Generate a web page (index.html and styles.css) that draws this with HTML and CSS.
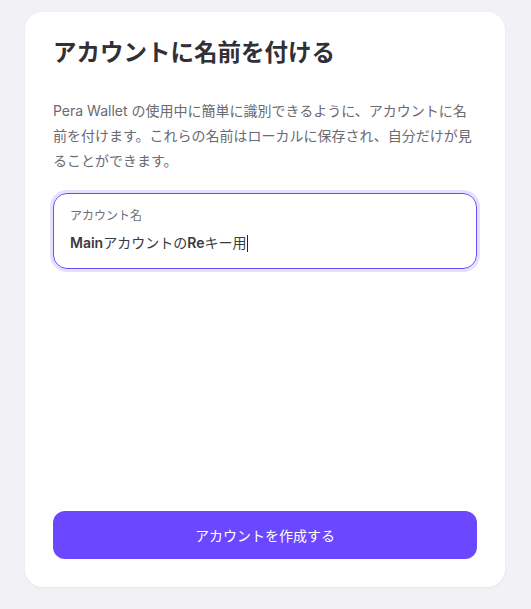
FILE: index.html
```html
<!DOCTYPE html>
<html lang="ja">
<head>
<meta charset="utf-8">
<link rel="stylesheet" href="styles.css">
</head>
<body>
<div class="card">
  <h1 class="title">アカウントに名前を付ける</h1>
  <p class="desc">Pera Wallet の使用中に簡単に識別できるように、アカウントに名前を付けます。これらの名前はローカルに保存され、自分だけが見ることができます。</p>
  <div class="field">
    <div class="field-label">アカウント名</div>
    <div class="field-value"><span class="lat">Main</span>アカウントの<span class="lat">Re</span>キー用<span class="caret"></span></div>
  </div>
  <button class="btn">アカウントを作成する</button>
</div>
</body>
</html>
```

FILE: styles.css
```css
html, body {
  margin: 0;
  padding: 0;
}
body {
  background: #f2f1f6;
  font-family: Inter, "Noto Sans CJK JP", sans-serif;
  width: 531px;
  height: 609px;
}
.card {
  box-sizing: border-box;
  margin: 12px 0 0 25px;
  width: 480px;
  height: 575px;
  background: #ffffff;
  border-radius: 18px;
  box-shadow: 0 1px 3px rgba(0,0,0,0.05);
  padding: 25px 28px 28px;
  display: flex;
  flex-direction: column;
}
.title {
  margin: 0;
  font-size: 23.5px;
  line-height: 32px;
  font-weight: 700;
  color: #303036;
}
.desc {
  margin: 29px 0 0;
  font-size: 14px;
  line-height: 25px;
  color: #6a6a72;
}
.field {
  margin-top: 20px;
  border: 1px solid #6b4bff;
  border-radius: 14px;
  box-shadow: 0 0 0 3px #e5e0ff;
  padding: 13px 16px 14px;
  height: 76px;
  box-sizing: border-box;
}
.field-label {
  font-size: 12px;
  line-height: 18px;
  color: #6e6e76;
}
.field-value {
  margin-top: 8px;
  font-size: 14px;
  line-height: 20px;
  color: #3a3a40;
  display: flex;
  align-items: center;
}
.lat {
  font-weight: 600;
}
.caret {
  display: inline-block;
  width: 1px;
  height: 17px;
  background: #222;
  margin-left: 1px;
}
.btn {
  margin-top: auto;
  height: 48px;
  border: none;
  border-radius: 12px;
  background: #6b48ff;
  color: #ffffff;
  font-family: Inter, "Noto Sans CJK JP", sans-serif;
  font-size: 14px;
}
```
